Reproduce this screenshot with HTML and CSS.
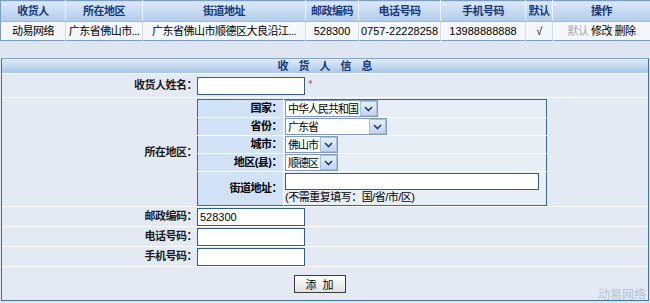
FILE: index.html
```html
<!DOCTYPE html>
<html lang="zh-CN">
<head>
    <meta charset="UTF-8">
    <title>收货人地址管理</title>
    <link rel="stylesheet" href="styles.css">
</head>
<body>

    <table class="list" cellspacing="0">
        <colgroup>
            <col class="c-name"><col class="c-area"><col class="c-addr"><col class="c-zip">
            <col class="c-tel"><col class="c-mob"><col class="c-def"><col class="c-op">
        </colgroup>
        <tr class="list-head">
            <th>收货人</th>
            <th>所在地区</th>
            <th>街道地址</th>
            <th>邮政编码</th>
            <th>电话号码</th>
            <th>手机号码</th>
            <th>默认</th>
            <th>操作</th>
        </tr>
        <tr class="list-row">
            <td>动易网络</td>
            <td>广东省佛山市...</td>
            <td>广东省佛山市顺德区大良沿江...</td>
            <td class="num">528300</td>
            <td class="num">0757-22228258</td>
            <td class="num">13988888888</td>
            <td>√</td>
            <td><span class="op-off">默认</span> <a href="#">修改</a> <a href="#">删除</a></td>
        </tr>
    </table>

    <div class="form-box">
        <table class="form" cellspacing="0">
            <tr>
                <th class="form-title" colspan="2">收货人信息</th>
            </tr>
            <tr class="row-name">
                <td class="lbl">收货人姓名：</td>
                <td class="val"><input type="text" class="txt"> <span class="req">*</span></td>
            </tr>
            <tr class="row-region">
                <td class="lbl">所在地区：</td>
                <td class="val">
                    <table class="region" cellspacing="0">
                        <tr>
                            <td class="r-lbl">国家：</td>
                            <td class="r-val">
                                <span class="sel sel-country"><select><option>中华人民共和国</option></select><span class="arrow"><svg width="9" height="6" viewBox="0 0 9 6"><polyline points="1,1 4.5,4.5 8,1" fill="none" stroke="#1f3f74" stroke-width="1.6"/></svg></span></span>
                            </td>
                        </tr>
                        <tr>
                            <td class="r-lbl">省份：</td>
                            <td class="r-val">
                                <span class="sel sel-prov"><select><option>广东省</option></select><span class="arrow"><svg width="9" height="6" viewBox="0 0 9 6"><polyline points="1,1 4.5,4.5 8,1" fill="none" stroke="#1f3f74" stroke-width="1.6"/></svg></span></span>
                            </td>
                        </tr>
                        <tr>
                            <td class="r-lbl">城市：</td>
                            <td class="r-val">
                                <span class="sel sel-city"><select><option>佛山市</option></select><span class="arrow"><svg width="9" height="6" viewBox="0 0 9 6"><polyline points="1,1 4.5,4.5 8,1" fill="none" stroke="#1f3f74" stroke-width="1.6"/></svg></span></span>
                            </td>
                        </tr>
                        <tr>
                            <td class="r-lbl">地区(县)：</td>
                            <td class="r-val">
                                <span class="sel sel-city"><select><option>顺德区</option></select><span class="arrow"><svg width="9" height="6" viewBox="0 0 9 6"><polyline points="1,1 4.5,4.5 8,1" fill="none" stroke="#1f3f74" stroke-width="1.6"/></svg></span></span>
                            </td>
                        </tr>
                        <tr class="row-street">
                            <td class="r-lbl">街道地址：</td>
                            <td class="r-val">
                                <input type="text" class="txt txt-street">
                                <div class="hint">(不需重复填写：国/省/市/区)</div>
                            </td>
                        </tr>
                    </table>
                </td>
            </tr>
            <tr class="row-small">
                <td class="lbl">邮政编码：</td>
                <td class="val"><input type="text" class="txt" value="528300"></td>
            </tr>
            <tr class="row-small">
                <td class="lbl">电话号码：</td>
                <td class="val"><input type="text" class="txt"></td>
            </tr>
            <tr class="row-small">
                <td class="lbl">手机号码：</td>
                <td class="val"><input type="text" class="txt"></td>
            </tr>
            <tr class="row-btn">
                <td class="btn-cell" colspan="2">
                    <button class="btn">添加</button>
                    <span class="mark">动易网络</span>
                </td>
            </tr>
        </table>
    </div>

</body>
</html>
```

FILE: styles.css
```css
/* 基础 */
body {
    margin: 0;
    background-color: #dde6f1;
    font-family: "Liberation Sans", "Noto Sans CJK SC", sans-serif;
    font-size: 11px;
    line-height: 13px;
    letter-spacing: -0.5px;
    color: #000;
}
table {
    border-collapse: collapse;
}
td, th {
    padding: 0;
}

/* 地址列表 */
.list {
    width: 650px;
    table-layout: fixed;
    border: 1px solid #7e9cc0;
    background-color: #f4f7fb;
}
.c-name { width: 65px; }
.c-area { width: 77px; }
.c-addr { width: 163px; }
.c-zip { width: 53px; }
.c-tel { width: 82px; }
.c-mob { width: 85px; }
.c-def { width: 27px; }
.c-op { width: 98px; }
.list-head th {
    height: 20px;
    background: linear-gradient(#dae8f8, #b2cceb);
    border-right: 1px solid #edf3fa;
    border-bottom: 1px solid #9ab6d7;
    color: #17397a;
    font-weight: bold;
    text-align: center;
}
.list-row td {
    height: 18px;
    border-right: 1px solid #d3dce8;
    text-align: center;
    white-space: nowrap;
    overflow: hidden;
}
.list-row .num {
    letter-spacing: 0;
}
.list-row a {
    color: #000;
    text-decoration: none;
}
.op-off {
    color: #a0a8b2;
}

/* 收货人信息 */
.form-box {
    margin-top: 17px;
    margin-left: 1px;
    width: 646px;
    border: 1px solid #44729f;
    border-top-color: #88a6ca;
    background-color: #e3eaf4;
}
.form {
    width: 100%;
}
.form-title {
    height: 14px;
    line-height: 14px;
    padding-left: 10px;
    background: linear-gradient(#e0ebf8, #a9c7ea);
    color: #17397a;
    letter-spacing: 10px;
    text-align: center;
    border-bottom: 1px solid #ffffff;
}
.form td {
    border-bottom: 1px solid #ffffff;
}
.lbl {
    width: 195px;
    text-align: right;
    font-weight: bold;
    color: #1a1a1a;
}
.row-name td {
    height: 23px;
}
.row-small td {
    height: 19px;
}
.txt {
    box-sizing: border-box;
    width: 108px;
    height: 18px;
    padding: 1px 2px;
    margin: 0;
    border: 1px solid #2f5d8a;
    background: #fff;
    font-family: "Liberation Sans", "Noto Sans CJK SC", sans-serif;
    font-size: 11px;
    vertical-align: middle;
}
.req {
    color: #e0362c;
    font-size: 10px;
    margin-left: 1px;
}

/* 地区 */
.row-region td.val {
    padding: 1px 0 0;
}
.region {
    width: 350px;
    border: 1px solid #3a6997;
}
.region td {
    border-bottom: 1px solid #ffffff;
}
.r-lbl {
    width: 84px;
    height: 17px;
    padding-right: 1px;
    background-color: #d1e2f6;
    text-align: right;
    font-weight: bold;
    border-right: 1px solid #ffffff;
}
.r-val {
    padding-left: 1px;
    background-color: #e8eef6;
}
.sel {
    display: inline-flex;
    box-sizing: border-box;
    height: 17px;
    border: 1px solid #7f9db9;
    background: #fff;
    vertical-align: middle;
}
.sel select {
    appearance: none;
    flex: 1;
    min-width: 0;
    height: 15px;
    padding: 0 0 0 2px;
    border: none;
    background: transparent;
    font-family: "Liberation Sans", "Noto Sans CJK SC", sans-serif;
    font-size: 11px;
    letter-spacing: -1px;
    color: #000;
}
.arrow {
    display: flex;
    align-items: center;
    justify-content: center;
    width: 15px;
    margin: 0 0 0 1px;
    border: 1px solid #a9bfdc;
    background: linear-gradient(#e6eefa, #c2d5f0);
}
.sel-country { width: 93px; }
.sel-prov { width: 102px; }
.sel-city { width: 53px; }
.row-street td {
    height: 33px;
    border-bottom: none;
}
.txt-street {
    width: 254px;
    height: 17px;
}
.hint {
    margin-top: 1px;
    line-height: 13px;
}

/* 按钮 */
.row-btn td {
    height: 33px;
    border-bottom: none;
    text-align: center;
    position: relative;
}
.btn {
    width: 52px;
    height: 18px;
    padding: 0 0 0 6px;
    margin-right: 11px;
    border: 1px solid #3a3a3a;
    background: linear-gradient(#ffffff, #e0e0e0);
    font-family: "Liberation Sans", "Noto Sans CJK SC", sans-serif;
    font-size: 11px;
    letter-spacing: 6px;
}
.mark {
    position: absolute;
    right: 2px;
    bottom: -2px;
    color: #afc6e2;
    font-size: 12px;
    line-height: 14px;
    letter-spacing: 0;
}
```
